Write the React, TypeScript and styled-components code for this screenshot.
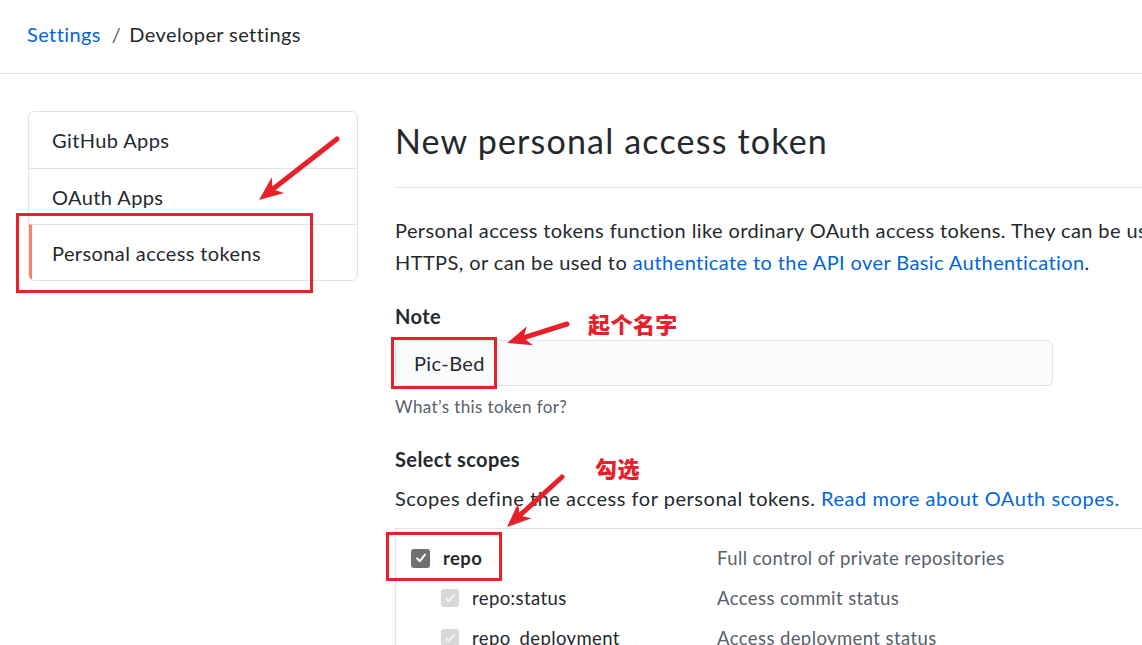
import React from "react";
import styled, { createGlobalStyle } from "styled-components";

const GlobalStyle = createGlobalStyle`
  html, body {
    margin: 0;
    padding: 0;
    overflow: hidden;
    background: #ffffff;
  }
  body {
    font-family: Lato, "Liberation Sans", "Noto Sans CJK SC", sans-serif;
    color: #24292e;
    letter-spacing: 0.025em;
  }
  * { box-sizing: border-box; }
`;

const Page = styled.div`
  position: relative;
  width: 1142px;
  height: 645px;
  overflow: hidden;
`;

const Header = styled.header`
  height: 74px;
  border-bottom: 1px solid #e1e4e8;
  display: flex;
  align-items: center;
  padding: 0 27px 5px;
  font-size: 20px;
`;

const Crumb = styled.a`
  color: #0366d6;
  text-decoration: none;
`;

const CrumbSep = styled.span`
  color: #586069;
  margin: 0 8px 0 11px;
`;

const CrumbCurrent = styled.span`
  color: #24292e;
`;

const Layout = styled.div`
  display: flex;
  align-items: flex-start;
  padding: 37px 0 0 28px;
  gap: 37px;
`;

const SideNav = styled.nav`
  flex: 0 0 330px;
  border: 1px solid #e1e4e8;
  border-radius: 6px;
  overflow: hidden;
`;

const NavItem = styled.div<{ $active?: boolean }>`
  height: 56px;
  display: flex;
  align-items: center;
  padding-left: ${(p) => (p.$active ? "20px" : "23px")};
  font-size: 20px;
  color: #24292e;
  border-left: ${(p) => (p.$active ? "3px solid #f9826c" : "none")};
  & + & {
    border-top: 1px solid #e1e4e8;
  }
`;

const Main = styled.main`
  flex: 0 0 920px;
`;

const Subhead = styled.div`
  margin-top: 8px;
  padding-bottom: 24px;
  border-bottom: 1px solid #e1e4e8;
`;

const Title = styled.h2`
  margin: 0;
  font-size: 34px;
  font-weight: 400;
  line-height: 44px;
  letter-spacing: 0.035em;
  color: #24292e;
`;

const Lead = styled.p`
  margin: 26px 0 0;
  font-size: 20px;
  line-height: 32px;
  white-space: nowrap;
`;

const Link = styled.a`
  color: #0366d6;
  text-decoration: none;
`;

const Label = styled.div<{ $top: number }>`
  margin-top: ${(p) => p.$top}px;
  font-size: 20px;
  font-weight: 700;
  line-height: 28px;
`;

const TextInput = styled.div`
  margin-top: 10px;
  width: 658px;
  height: 46px;
  background: #fafbfc;
  border: 1px solid #e1e4e8;
  border-radius: 6px;
  display: flex;
  align-items: center;
  padding-left: 18px;
  font-size: 20px;
`;

const Hint = styled.div`
  margin-top: 9px;
  font-size: 17px;
  line-height: 24px;
  color: #586069;
`;

const ScopesIntro = styled.p`
  margin: 9px 0 0;
  font-size: 20px;
  line-height: 32px;
  letter-spacing: 0.027em;
  white-space: nowrap;
`;

const ScopeTable = styled.div`
  margin-top: 14px;
  border-top: 1px solid #e1e4e8;
  border-left: 1px solid #e1e4e8;
  padding: 9px 0 0 15px;
`;

const ScopeRow = styled.div`
  display: grid;
  grid-template-columns: 306px 1fr;
  align-items: center;
  height: 40px;
`;

const ScopeName = styled.div<{ $indent: number; $strong?: boolean }>`
  display: flex;
  align-items: center;
  gap: 13px;
  padding-left: ${(p) => p.$indent}px;
  font-size: 18.5px;
  font-weight: ${(p) => (p.$strong ? 700 : 400)};
  color: #24292e;
`;

const ScopeDesc = styled.div`
  font-size: 18.5px;
  color: #586069;
`;

const Box = styled.span<{ $disabled?: boolean }>`
  width: ${(p) => (p.$disabled ? 18 : 19)}px;
  height: ${(p) => (p.$disabled ? 18 : 19)}px;
  border-radius: 3px;
  background: ${(p) => (p.$disabled ? "#d9d9d9" : "#707070")};
  display: inline-flex;
  align-items: center;
  justify-content: center;
  flex: 0 0 auto;
`;

const Overlay = styled.svg`
  position: absolute;
  left: 0;
  top: 0;
  pointer-events: none;
`;

const Frame = styled.div<{ $x: number; $y: number; $w: number; $h: number }>`
  position: absolute;
  left: ${(p) => p.$x}px;
  top: ${(p) => p.$y}px;
  width: ${(p) => p.$w}px;
  height: ${(p) => p.$h}px;
  border: 3px solid #e8202a;
  pointer-events: none;
`;

const Note = styled.div<{ $x: number; $y: number }>`
  position: absolute;
  left: ${(p) => p.$x}px;
  top: ${(p) => p.$y}px;
  font-family: "Noto Sans CJK SC", sans-serif;
  font-weight: 900;
  font-size: 22px;
  line-height: 28px;
  letter-spacing: 0.02em;
  color: #e8202a;
  text-shadow: 0 0 2px #fff, 0 0 3px #fff, 0 0 4px #ffffff;
`;

const Check = ({ disabled }: { disabled?: boolean }) => (
  <Box $disabled={disabled}>
    <svg width="12" height="12" viewBox="0 0 12 12">
      <path
        d="M2 6.4 L4.8 9.2 L10 2.6"
        fill="none"
        stroke={disabled ? "#f4f4f4" : "#ffffff"}
        strokeWidth="2"
        strokeLinecap="round"
        strokeLinejoin="round"
      />
    </svg>
  </Box>
);

type Pt = [number, number];

const arrowParts = (tail: Pt, tip: Pt) => {
  const dx = tip[0] - tail[0];
  const dy = tip[1] - tail[1];
  const len = Math.hypot(dx, dy);
  const ux = dx / len;
  const uy = dy / len;
  const nx = -uy;
  const ny = ux;
  const L = 24;
  const W = 10;
  const bx = tip[0] - ux * L;
  const by = tip[1] - uy * L;
  const notchX = tip[0] - ux * L * 0.72;
  const notchY = tip[1] - uy * L * 0.72;
  const head = `${tip[0]},${tip[1]} ${bx + nx * W},${by + ny * W} ${notchX},${notchY} ${bx - nx * W},${by - ny * W}`;
  return { head, lx: notchX + ux * 2, ly: notchY + uy * 2 };
};

const Arrow = ({ tail, tip }: { tail: Pt; tip: Pt }) => {
  const { head, lx, ly } = arrowParts(tail, tip);
  return (
    <g>
      <line
        x1={tail[0]}
        y1={tail[1]}
        x2={lx}
        y2={ly}
        stroke="#e8202a"
        strokeWidth="5"
        strokeLinecap="round"
      />
      <polygon points={head} fill="#e8202a" />
    </g>
  );
};

export default function App() {
  return (
    <Page>
      <GlobalStyle />
      <Header>
        <Crumb href="#">Settings</Crumb>
        <CrumbSep>/</CrumbSep>
        <CrumbCurrent>Developer settings</CrumbCurrent>
      </Header>
      <Layout>
        <SideNav>
          <NavItem>GitHub Apps</NavItem>
          <NavItem>OAuth Apps</NavItem>
          <NavItem $active>Personal access tokens</NavItem>
        </SideNav>
        <Main>
          <Subhead>
            <Title>New personal access token</Title>
          </Subhead>
          <Lead>
            Personal access tokens function like ordinary OAuth access tokens. They can be used instead of a password for Git over
            <br />
            HTTPS, or can be used to <Link href="#">authenticate to the API over Basic Authentication</Link>.
          </Lead>
          <Label $top={24}>Note</Label>
          <TextInput>Pic-Bed</TextInput>
          <Hint>What’s this token for?</Hint>
          <Label $top={26}>Select scopes</Label>
          <ScopesIntro>
            Scopes define the access for personal tokens. <Link href="#">Read more about OAuth scopes.</Link>
          </ScopesIntro>
          <ScopeTable>
            <ScopeRow>
              <ScopeName $indent={0} $strong>
                <Check />
                repo
              </ScopeName>
              <ScopeDesc>Full control of private repositories</ScopeDesc>
            </ScopeRow>
            <ScopeRow>
              <ScopeName $indent={30}>
                <Check disabled />
                repo:status
              </ScopeName>
              <ScopeDesc>Access commit status</ScopeDesc>
            </ScopeRow>
            <ScopeRow>
              <ScopeName $indent={30}>
                <Check disabled />
                repo_deployment
              </ScopeName>
              <ScopeDesc>Access deployment status</ScopeDesc>
            </ScopeRow>
          </ScopeTable>
        </Main>
      </Layout>

      <Frame $x={16} $y={213} $w={297} $h={80} />
      <Frame $x={391} $y={337} $w={106} $h={52} />
      <Frame $x={386} $y={532} $w={116} $h={49} />
      <Note $x={588} $y={309}>起个名字</Note>
      <Note $x={595} $y={453}>勾选</Note>
      <Overlay width="1142" height="645" viewBox="0 0 1142 645">
        <Arrow tail={[337, 139]} tip={[259, 200]} />
        <Arrow tail={[567, 324]} tip={[507, 343]} />
        <Arrow tail={[562, 477]} tip={[507, 527]} />
      </Overlay>
    </Page>
  );
}
